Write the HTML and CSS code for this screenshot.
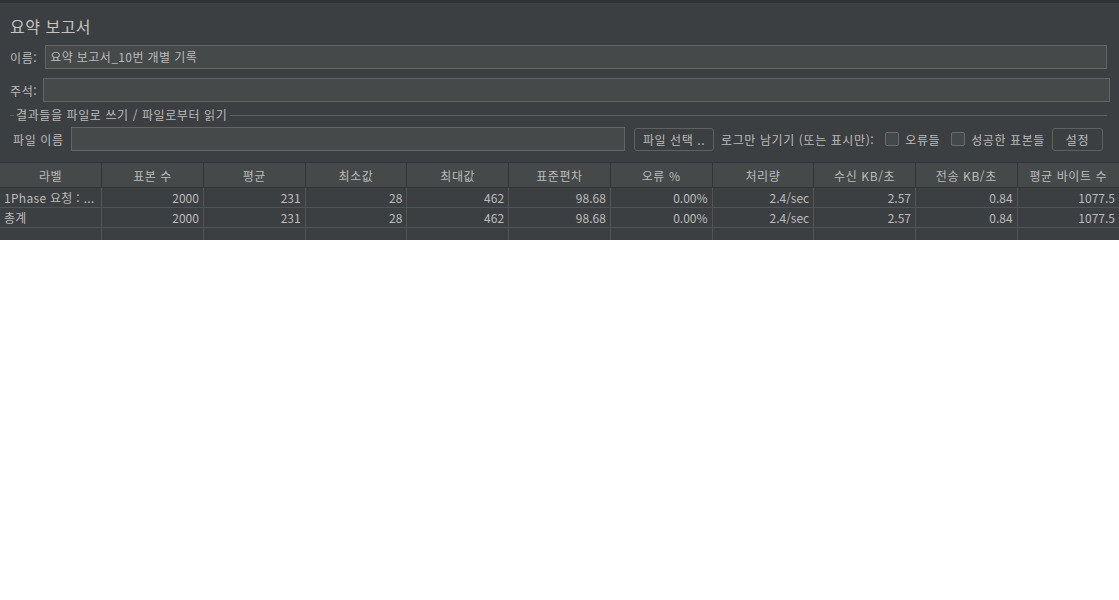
FILE: index.html
```html
<!DOCTYPE html>
<html lang="ko">
<head>
<meta charset="utf-8">
<title>요약 보고서</title>
<link rel="stylesheet" href="styles.css">
</head>
<body>
<div class="panel">
  <div class="title">요약 보고서</div>
  <div class="row row-name">
    <span class="lbl">이름:</span>
    <div class="field">요약 보고서_10번 개별 기록</div>
  </div>
  <div class="row row-comment">
    <span class="lbl">주석:</span>
    <div class="field"></div>
  </div>
  <div class="section">
    <span class="sline short"></span>
    <span class="legend">결과들을 파일로 쓰기 / 파일로부터 읽기</span>
    <span class="sline long"></span>
  </div>
  <div class="row row-file">
    <span class="lbl">파일 이름</span>
    <div class="field file-field"></div>
    <button class="btn btn-file">파일 선택 ..</button>
    <span class="txt">로그만 남기기 (또는 표시만):</span>
    <span class="check"></span>
    <span class="txt chk-lbl">오류들</span>
    <span class="check"></span>
    <span class="txt chk-lbl">성공한 표본들</span>
    <button class="btn btn-set">설정</button>
  </div>
  <table class="grid">
    <thead>
      <tr>
        <th>라벨</th><th>표본 수</th><th>평균</th><th>최소값</th><th>최대값</th><th>표준편차</th><th>오류 %</th><th>처리량</th><th>수신 KB/초</th><th>전송 KB/초</th><th>평균 바이트 수</th>
      </tr>
    </thead>
    <tbody>
      <tr>
        <td class="l">1Phase 요청 : ...</td><td>2000</td><td>231</td><td>28</td><td>462</td><td>98.68</td><td>0.00%</td><td>2.4/sec</td><td>2.57</td><td>0.84</td><td>1077.5</td>
      </tr>
      <tr>
        <td class="l">총계</td><td>2000</td><td>231</td><td>28</td><td>462</td><td>98.68</td><td>0.00%</td><td>2.4/sec</td><td>2.57</td><td>0.84</td><td>1077.5</td>
      </tr>
      <tr class="empty">
        <td></td><td></td><td></td><td></td><td></td><td></td><td></td><td></td><td></td><td></td><td></td>
      </tr>
    </tbody>
  </table>
</div>
</body>
</html>
```
FILE: styles.css
```css
* { box-sizing: border-box; }
html, body { margin: 0; padding: 0; background: #ffffff; }
body {
  font-family: "Noto Sans CJK KR", "Noto Sans", sans-serif;
  font-size: 12px;
  color: #bbbbbb;
  letter-spacing: 0.6px;
}
.panel {
  background: #3c3f41;
  border-top: 3px solid #2f3234;
  height: 240px;
  overflow: hidden;
}
.title {
  font-size: 16px;
  line-height: 22px;
  padding: 12px 0 0 10px;
  height: 42px;
  color: #c4c4c4;
  letter-spacing: 0.5px;
}
.row {
  display: flex;
  align-items: center;
}
.lbl { white-space: nowrap; }
.field {
  flex: 1;
  background: #45494a;
  border: 1px solid #646464;
  height: 24px;
  line-height: 22px;
  padding: 0 4px;
  color: #bbbbbb;
  letter-spacing: 0.4px;
}
.row-name { padding: 0 12px 0 10px; height: 24px; gap: 8px; }
.row-comment { padding: 0 9px 0 10px; height: 24px; margin-top: 9px; gap: 6px; }
.section {
  display: flex;
  align-items: center;
  height: 16px;
  margin-top: 5px;
  padding: 0 12px 0 10px;
}
.sline { height: 1px; background: #5c5f61; }
.sline.short { width: 4px; }
.sline.long { flex: 1; }
.legend { padding: 0 3px 0 2px; line-height: 16px; }
.row-file {
  padding: 0 16px 0 13px;
  height: 24px;
  margin-top: 4px;
}
.row-file .lbl { margin-right: 7px; }
.file-field { height: 24px; }
.btn {
  font-family: inherit;
  font-size: 12px;
  letter-spacing: 0.6px;
  color: #bbbbbb;
  background: #3c3f41;
  border: 1px solid #5e6162;
  border-radius: 3px;
  height: 23px;
  padding: 0;
  line-height: 21px;
}
.btn-file { width: 80px; margin-left: 9px; }
.txt { white-space: nowrap; }
.row-file > .txt:not(.chk-lbl) { margin-left: 7px; }
.check {
  width: 14px;
  height: 14px;
  background: #43494a;
  border: 1px solid #6b6b6b;
  border-radius: 2px;
  margin-left: 11px;
  flex: none;
}
.chk-lbl { margin-left: 6px; }
.btn-set { width: 51px; margin-left: 7px; }
.grid {
  margin-top: 11px;
  width: 100%;
  table-layout: fixed;
  border-collapse: collapse;
}
.grid th {
  background: #45494a;
  font-weight: normal;
  height: 25px;
  text-align: center;
  border-top: 1px solid #323537;
  border-bottom: 1px solid #323537;
  border-left: 1px solid #323537;
  padding: 0;
  white-space: nowrap;
  overflow: hidden;
}
.grid th:first-child, .grid td:first-child { border-left: none; }
.grid td {
  height: 20px;
  padding: 0 4px;
  text-align: right;
  border-bottom: 1px solid #515457;
  border-left: 1px solid #515457;
  white-space: nowrap;
  overflow: hidden;
  line-height: 18px;
  letter-spacing: 0;
}
.grid td.l { text-align: left; letter-spacing: 0.3px; }
```
